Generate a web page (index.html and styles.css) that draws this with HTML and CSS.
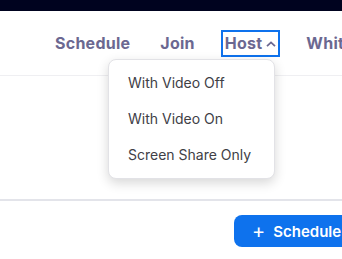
FILE: index.html
```html
<!DOCTYPE html>
<html lang="en">
<head>
  <meta charset="UTF-8" />
  <meta name="viewport" content="width=device-width, initial-scale=1.0" />
  <title>Host</title>
  <link rel="stylesheet" href="styles.css">
</head>
<body>

  <div class="topbar"></div>

  <!-- main navigation -->
  <header class="header">
    <nav class="nav">
      <a class="nav-item">Schedule</a>
      <a class="nav-item">Join</a>
      <a class="nav-item open">Host
        <svg class="caret" width="10" height="6" viewBox="0 0 10 6"><polyline points="1,5.2 5,1.4 9,5.2" fill="none" stroke="currentColor" stroke-width="1.8" /></svg>
      </a>
      <a class="nav-item">Whiteboard</a>
    </nav>

    <!-- host dropdown -->
    <div class="menu">
      <div class="menu-item">With Video Off</div>
      <div class="menu-item">With Video On</div>
      <div class="menu-item">Screen Share Only</div>
    </div>
  </header>

  <main class="content"></main>

  <section class="actions">
    <button class="btn-schedule"><span class="plus">+</span>Schedule</button>
  </section>

</body>
</html>
```
FILE: styles.css
```css
:root {
  --nav-text: #6b6891;
  --blue: #0e72ed;
  --line: #e3e4ea;
}

html, body {
  margin: 0;
  overflow: hidden;
}

body {
  background: #ffffff;
  font-family: 'Inter', 'Liberation Sans', sans-serif;
  width: 342px;
  height: 259px;
}

.topbar {
  height: 11px;
  background: #00031f;
}

.header {
  position: relative;
  height: 64px;
  border-bottom: 1px solid #efeff2;
  display: flex;
  align-items: center;
}

.nav {
  display: flex;
  align-items: center;
  gap: 22px;
  padding-left: 51px;
  white-space: nowrap;
}

.nav-item {
  display: flex;
  align-items: center;
  gap: 4px;
  font-size: 16px;
  font-weight: 700;
  letter-spacing: 0.25px;
  color: var(--nav-text);
  line-height: 23px;
  padding: 0 2px;
  border: 2px solid transparent;
}

.nav-item.open {
  border-color: var(--blue);
}

.caret {
  display: block;
  margin-top: 1px;
}

.menu {
  position: absolute;
  left: 108px;
  top: 48px;
  width: 165px;
  padding: 5px 0;
  background: #ffffff;
  border: 1px solid #e2e2e6;
  border-radius: 8px;
  box-shadow: 0 4px 12px rgba(0, 0, 0, 0.16);
}

.menu-item {
  height: 36px;
  line-height: 36px;
  padding-left: 19px;
  font-size: 14px;
  color: #404046;
}

.content {
  height: 123px;
  border-bottom: 2px solid var(--line);
}

.actions {
  padding: 14px 0 0 234px;
}

.btn-schedule {
  display: flex;
  align-items: center;
  height: 32px;
  padding: 0 20px 0 18px;
  border: none;
  border-radius: 8px;
  background: var(--blue);
  color: #ffffff;
  font-family: inherit;
  font-size: 15px;
  font-weight: 600;
  white-space: nowrap;
}

.plus {
  font-size: 20px;
  font-weight: 400;
  margin-right: 8px;
}
```
